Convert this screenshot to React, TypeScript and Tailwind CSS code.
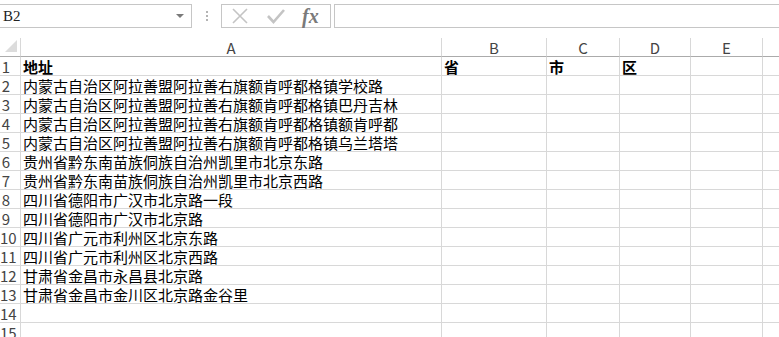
import React from 'react'

const rows = [
  '地址',
  '内蒙古自治区阿拉善盟阿拉善右旗额肯呼都格镇学校路',
  '内蒙古自治区阿拉善盟阿拉善右旗额肯呼都格镇巴丹吉林',
  '内蒙古自治区阿拉善盟阿拉善右旗额肯呼都格镇额肯呼都',
  '内蒙古自治区阿拉善盟阿拉善右旗额肯呼都格镇乌兰塔塔',
  '贵州省黔东南苗族侗族自治州凯里市北京东路',
  '贵州省黔东南苗族侗族自治州凯里市北京西路',
  '四川省德阳市广汉市北京路一段',
  '四川省德阳市广汉市北京路',
  '四川省广元市利州区北京东路',
  '四川省广元市利州区北京西路',
  '甘肃省金昌市永昌县北京路',
  '甘肃省金昌市金川区北京路金谷里',
  '',
  '',
]

// B..E header values in row 1
const header = ['省', '市', '区', '']
const cols = ['B', 'C', 'D', 'E']

const font = { fontFamily: '"Noto Sans CJK SC", "Noto Sans", sans-serif' }

const FormulaBar = () => (
  <div className="flex h-[38px] bg-white">
    <div className="mt-1 flex h-[24px] w-[192px] items-center justify-between border border-l-0 border-[#c6c6c6] pl-[3px] pr-[7px]">
      <span className="text-[15px] text-[#222]" style={{ fontFamily: '"Liberation Serif", serif' }}>
        B2
      </span>
      <svg width="8" height="5" viewBox="0 0 8 5">
        <path d="M0 0 L8 0 L4 4 Z" fill="#7a7a7a" />
      </svg>
    </div>
    <div className="flex w-[29px] flex-col items-center justify-center gap-[2px] pb-[6px]">
      <span className="h-[2px] w-[2px] bg-[#b4b4b4]" />
      <span className="h-[2px] w-[2px] bg-[#b4b4b4]" />
      <span className="h-[2px] w-[2px] bg-[#b4b4b4]" />
    </div>
    <div className="mt-1 flex h-[24px] w-[110px] items-center border border-[#c6c6c6]">
      <svg className="ml-[9px]" width="18" height="18" viewBox="0 0 18 18">
        <path d="M2 2 L16 16 M16 2 L2 16" stroke="#c4c4c4" strokeWidth="1.6" />
      </svg>
      <svg className="ml-[18px]" width="18" height="18" viewBox="0 0 18 18">
        <path d="M1 9 L6.5 15 L17 3" stroke="#c4c4c4" strokeWidth="2.6" fill="none" />
      </svg>
      <span
        className="ml-[17px] text-[20px] font-bold italic leading-none text-[#7a7a7a]"
        style={{ fontFamily: '"Liberation Serif", serif' }}
      >
        fx
      </span>
    </div>
    <div className="ml-[3px] mt-1 h-[24px] flex-1 border border-r-0 border-[#c6c6c6]" />
  </div>
)

const App = () => {
  const grid = 'grid grid-cols-[21px_421px_105px_73px_71px_72px_1fr]'
  const cell = 'h-[19px] overflow-hidden border-b border-r border-[#d8d8d8]'

  return (
    <div className="h-[337px] w-[779px] overflow-hidden bg-white" style={font}>
      <FormulaBar />
      <div className={grid}>
        <div className="relative h-[19px] border-b border-r border-b-[#ababab] border-r-[#d8d8d8]">
          <svg className="absolute left-[5px] top-[2px]" width="12" height="12" viewBox="0 0 12 12">
            <path d="M12 0 L12 12 L0 12 Z" fill="#dcdcdc" />
          </svg>
        </div>
        {['A', ...cols, ''].map((c, i) => (
          <div
            key={i}
            className={`flex h-[19px] items-center justify-center border-b border-b-[#ababab] text-[15px] leading-none text-[#444] ${i < 5 ? 'border-r border-r-[#d8d8d8]' : ''}`}
          >
            {c}
          </div>
        ))}
        {rows.map((text, r) => (
          <React.Fragment key={r}>
            <div className={`${cell} flex items-center text-[15px] leading-none text-[#444]`}>
              <span className="w-[12px] shrink-0 text-center">{r + 1}</span>
            </div>
            <div
              className={`${cell} flex items-center whitespace-nowrap pl-[2px] text-[15px] leading-none text-black ${r === 0 ? 'font-bold' : ''}`}
            >
              {text}
            </div>
            {header.map((h, i) => (
              <div
                key={i}
                className={`${cell} flex items-center pl-[2px] text-[15px] font-bold leading-none text-black`}
              >
                {r === 0 ? h : ''}
              </div>
            ))}
            <div className="h-[19px] border-b border-[#d8d8d8]" />
          </React.Fragment>
        ))}
      </div>
    </div>
  )
}

export default App
